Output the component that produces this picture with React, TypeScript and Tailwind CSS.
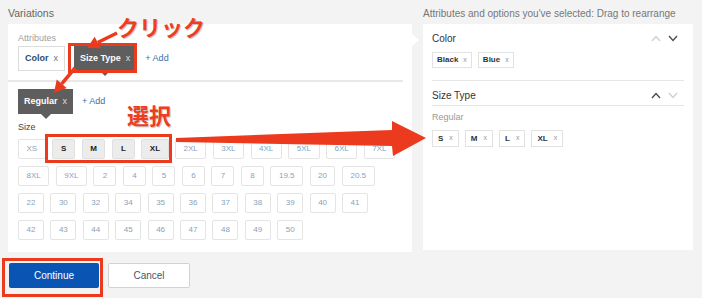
import React from 'react';

const sizeRows: string[][] = [
  ['XS', 'S', 'M', 'L', 'XL', '2XL', '3XL', '4XL', '5XL', '6XL', '7XL'],
  ['8XL', '9XL', '2', '4', '5', '6', '7', '8', '19.5', '20', '20.5'],
  ['22', '30', '32', '34', '35', '36', '37', '38', '39', '40', '41'],
  ['42', '43', '44', '45', '46', '47', '48', '49', '50'],
];
const selected = ['S', 'M', 'L', 'XL'];

const Chevron = ({ up, dark }: { up?: boolean; dark?: boolean }) => (
  <svg width="10" height="7" viewBox="0 0 10 7" fill="none">
    <polyline
      points={up ? '1,6 5,1.5 9,6' : '1,1 5,5.5 9,1'}
      stroke={dark ? '#4a4a4a' : '#cfcfcf'}
      strokeWidth="1.3"
      fill="none"
    />
  </svg>
);

const DarkChip = ({ label }: { label: string }) => (
  <div className="relative flex h-[25px] items-center gap-[5px] bg-[#5e5e5e] px-[6px] text-[9px]">
    <span className="font-bold text-white">{label}</span>
    <span className="text-[#dddddd]">x</span>
    <span className="absolute left-1/2 top-full -ml-[5px] h-0 w-0 border-x-[5px] border-t-[5px] border-x-transparent border-t-[#5e5e5e]" />
  </div>
);

const SmallChip = ({ label, tight }: { label: string; tight?: boolean }) => (
  <div
    className={`flex items-center border border-[#e2e2e2] bg-white text-[8px] ${
      tight ? 'h-[16px] gap-[5px] px-[4px]' : 'h-[17px] gap-[6px] px-[5px]'
    }`}
  >
    <span className="font-bold text-[#333]">{label}</span>
    <span className="text-[7px] text-[#999]">x</span>
  </div>
);

const SectionHead = ({ title, upDark }: { title: string; upDark?: boolean }) => (
  <div className="flex h-[14px] items-center justify-between pr-[6px]">
    <span className="text-[10px] text-[#333]">{title}</span>
    <div className="flex items-center gap-[7px]">
      <Chevron up dark={upDark} />
      <Chevron dark={!upDark} />
    </div>
  </div>
);

export default function App() {
  return (
    <div className="relative h-[298px] w-[702px] overflow-hidden bg-[#f3f3f3] font-['Liberation_Sans',Arial,sans-serif]">
      <div className="flex gap-[11px] pl-[8px]">
        {/* left: variations */}
        <div className="w-[404px]">
          <div className="h-[24px] pt-[7px] text-[10.5px] leading-[13px] text-[#666]">Variations</div>
          <div className="relative h-[228px] bg-white pl-[10px] pr-[9px] pt-[9px]">
            <span className="absolute -right-[7px] top-[10px] h-0 w-0 border-y-[6px] border-l-[7px] border-y-transparent border-l-white" />
            <div className="text-[9px] leading-[11px] text-[#a0a0a0]">Attributes</div>
            <div className="mt-[2px] flex items-center gap-[9px]">
              <div className="flex h-[25px] items-center gap-[5px] border border-[#dcdcdc] bg-white px-[6px] text-[9px]">
                <span className="font-bold text-[#2d4c6c]">Color</span>
                <span className="text-[#777]">x</span>
              </div>
              <DarkChip label="Size Type" />
              <span className="text-[9px] text-[#3d6fa8]">+ Add</span>
            </div>
            <div className="-ml-[10px] mt-[9px] h-[2px] bg-[#e8e8e8]" />
            <div className="mt-[7px] flex items-center gap-[9px]">
              <DarkChip label="Regular" />
              <span className="text-[9px] text-[#3d6fa8]">+ Add</span>
            </div>
            <div className="mt-[8px] text-[9px] leading-[11px] text-[#444]">Size</div>
            <div className="mt-[6px] flex flex-col gap-[7px]">
              {sizeRows.map((row, i) => (
                <div key={i} className="flex gap-[6.5px]">
                  {row.map((s) => {
                    const on = i === 0 && selected.includes(s);
                    return (
                      <div
                        key={s}
                        className={`flex h-[20px] min-w-[23px] items-center justify-center rounded-[2px] border px-[7.5px] text-[8px] ${
                          on
                            ? 'border-[#e0e0e0] bg-[#ececec] font-bold text-[#222]'
                            : 'border-[#e4e4e4] bg-white text-[#87a2be]'
                        }`}
                      >
                        {s}
                      </div>
                    );
                  })}
                </div>
              ))}
            </div>
          </div>
        </div>

        {/* right: selected attributes */}
        <div className="w-[270px]">
          <div className="h-[24px] pt-[8px] text-[10px] leading-[12px] text-[#777]">
            Attributes and options you've selected: Drag to rearrange
          </div>
          <div className="h-[226px] bg-white pl-[9px] pr-[9px] pt-[7px]">
            <SectionHead title="Color" />
            <div className="mt-[7px] flex gap-[6px]">
              <SmallChip label="Black" tight />
              <SmallChip label="Blue" tight />
            </div>
            <div className="mt-[12px] h-px bg-[#e6e6e6]" />
            <div className="mt-[7px]">
              <SectionHead title="Size Type" upDark />
            </div>
            <div className="mt-[3px] h-px bg-[#e6e6e6]" />
            <div className="mt-[6px] text-[9px] leading-[11px] text-[#999]">Regular</div>
            <div className="mt-[7px] flex gap-[6px]">
              {selected.map((s) => (
                <SmallChip key={s} label={s} />
              ))}
            </div>
          </div>
        </div>
      </div>

      {/* buttons */}
      <div className="mt-[11px] flex gap-[9px] pl-[9px]">
        <button className="flex h-[25px] w-[90px] items-center justify-center rounded-[2px] bg-[#0a54b4] text-[10px] text-white">
          Continue
        </button>
        <button className="flex h-[25px] w-[82px] items-center justify-center rounded-[2px] border border-[#d2d2d2] bg-white text-[10px] text-[#4a5568]">
          Cancel
        </button>
      </div>

      {/* annotations */}
      <div className="pointer-events-none absolute left-[68px] top-[43px] h-[30px] w-[69px] border-[3px] border-[#ec3a1e]" />
      <div className="pointer-events-none absolute left-[45px] top-[134px] h-[29px] w-[127px] border-[3px] border-[#ec3a1e]" />
      <div className="pointer-events-none absolute left-[2px] top-[258px] h-[39px] w-[101px] border-[3px] border-[#ec3a1e]" />

      <svg className="pointer-events-none absolute left-0 top-0" width="702" height="298" viewBox="0 0 702 298">
        <line x1="117" y1="33" x2="97.7" y2="42.5" stroke="#ec3a1e" strokeWidth="3.5" />
        <polygon points="87,48 100.6,48.3 94.7,36.7" fill="#ec3a1e" />
        <line x1="75" y1="68" x2="61.7" y2="83.8" stroke="#ec3a1e" strokeWidth="3.5" />
        <polygon points="54,93 66.7,88 56.7,79.6" fill="#ec3a1e" />
        <polygon
          points="176,138 392,130 392,121 426,138 393,156 392,146 176,142"
          fill="#ec3a1e"
        />
      </svg>

      <div className="pointer-events-none absolute left-[117px] top-[15px] text-[22px] font-bold leading-none text-[#ee3d1f] [font-family:'Noto_Sans_CJK_JP',sans-serif] [text-shadow:1px_1px_1px_rgba(0,0,0,0.25)]">
        クリック
      </div>
      <div className="pointer-events-none absolute left-[127px] top-[103px] text-[22px] font-bold leading-none text-[#ee3d1f] [font-family:'Noto_Sans_CJK_JP',sans-serif] [text-shadow:1px_1px_1px_rgba(0,0,0,0.25)]">
        選択
      </div>
    </div>
  );
}
